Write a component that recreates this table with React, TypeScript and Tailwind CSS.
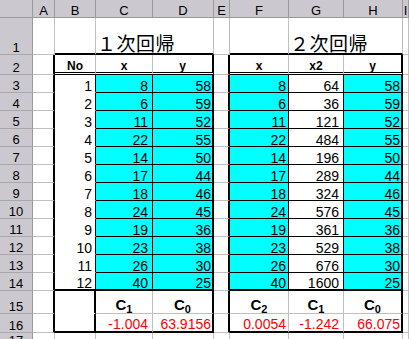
import type { ReactNode } from 'react'

const COLS = ['A', 'B', 'C', 'D', 'E', 'F', 'G', 'H', 'I']
const ROWS = Array.from({ length: 17 }, (_, i) => i + 1)

// 回帰用のサンプルデータ
const X = [8, 6, 11, 22, 14, 17, 18, 24, 19, 23, 26, 40]
const Y = [58, 59, 52, 55, 50, 44, 46, 45, 36, 38, 30, 25]

const RIGHT = {
  g: 'border-r border-r-[#c0c0c0]',
  b: 'border-r border-r-black',
  B: 'border-r-2 border-r-black',
}
const BOTTOM = {
  g: 'border-b border-b-[#c0c0c0]',
  b: 'border-b border-b-black',
  B: 'border-b-2 border-b-black',
  w: 'border-b border-b-white',
  d: 'border-b-[3px] border-b-black [border-bottom-style:double]',
}

// 列ごとの右余白 (A..I)
const PR = ['', 'pr-[3px]', 'pr-[4px]', 'pr-[1px]', '', 'pr-[2px]', 'pr-[4px]', 'pr-[1px]', '']

const inTable = (c: number) => (c >= 1 && c <= 3) || (c >= 5 && c <= 7)

function rightEdge(r: number, c: number): keyof typeof RIGHT {
  const body = r >= 2 && r <= 16
  if (body && (c === 0 || c === 3 || c === 4 || c === 7)) return 'B'
  if (r >= 3 && r <= 14 && (c === 1 || c === 2 || c === 5 || c === 6)) return 'b'
  if ((r === 15 || r === 16) && c === 1) return 'B'
  return 'g'
}

function bottomEdge(r: number, c: number): keyof typeof BOTTOM {
  if (!inTable(c)) return 'g'
  if (r === 1 || r === 14 || r === 16) return 'B'
  if (r === 2) return 'd'
  if (c === 1 && r >= 3 && r <= 15) return 'w'
  if (r >= 3 && r <= 13) return 'b'
  return 'g'
}

function Coef({ n }: { n: number }) {
  return (
    <span className="pb-[2px] text-[15px] font-bold leading-[12px]">
      C<sub className="text-[11px]">{n}</sub>
    </span>
  )
}

function content(r: number, c: number): { node?: ReactNode; center?: boolean } {
  if (r === 2) {
    const head = ['', 'No', 'x', 'y', '', 'x', 'x2', 'y', '']
    return {
      node: head[c] && <span className="text-[12px] font-bold leading-[12px]">{head[c]}</span>,
      center: true,
    }
  }
  if (r >= 3 && r <= 14) {
    const i = r - 3
    const v = [null, i + 1, X[i], Y[i], null, X[i], X[i] * X[i], Y[i], null][c]
    return { node: v !== null && <span className="leading-[12px]">{v}</span> }
  }
  if (r === 15) {
    const n = [null, null, 1, 0, null, 2, 1, 0, null][c]
    return { node: n !== null && <Coef n={n} />, center: true }
  }
  if (r === 16) {
    const v = ['', '', '-1.004', '63.9156', '', '0.0054', '-1.242', '66.075', ''][c]
    return { node: v && <span className="pb-[1px] leading-[12px] text-[#ff0000]">{v}</span> }
  }
  return {}
}

function Cell({ r, c }: { r: number; c: number }) {
  const { node, center } = content(r, c)
  const cyan = r >= 3 && r <= 14 && (c === 2 || c === 3 || c === 5 || c === 7)
  return (
    <div
      className={`flex items-end ${center ? 'justify-center' : `justify-end ${PR[c]}`} ${RIGHT[rightEdge(r, c)]} ${BOTTOM[bottomEdge(r, c)]} ${cyan ? 'bg-[#00ffff]' : 'bg-white'}`}
    >
      {node}
    </div>
  )
}

function Title({ text, last }: { text: string; last: number }) {
  return (
    <div
      className={`col-span-2 flex items-end pl-[1px] ${RIGHT[rightEdge(1, last)]} border-b-2 border-b-black`}
    >
      <span className="font-['Noto_Sans_CJK_JP',sans-serif] text-[19px] leading-[20px] tracking-[0.5px]">
        {text}
      </span>
    </div>
  )
}

function RowHead({ r }: { r: number }) {
  return (
    <div className="flex items-end justify-center border-r border-b border-r-[#9a9a9a] border-b-[#a8a8a8] bg-[#ccc8d0] text-[13px]">
      <span className="leading-[12px]">{r}</span>
    </div>
  )
}

export default function App() {
  return (
    <div className="h-[339px] w-[409px] overflow-hidden bg-white font-['Liberation_Sans',Arial,sans-serif] text-[14px] text-black">
      <div className="grid grid-cols-[33px_22px_41px_57px_61px_16px_59px_55px_59px_6px] grid-rows-[18px_37px_20px_repeat(12,18px)_23px_19px_15px]">
        {/* 列見出し */}
        <div className="border-r border-b border-r-[#9a9a9a] border-b-[#9a9a9a] bg-[#ccc8d0]" />
        {COLS.map((l) => (
          <div
            key={l}
            className="flex items-end justify-center overflow-hidden border-r border-b border-r-[#9a9a9a] border-b-[#9a9a9a] bg-[#ccc8d0] text-[13px]"
          >
            <span className="leading-[13px]">{l}</span>
          </div>
        ))}

        {ROWS.map((r) =>
          r === 1 ? (
            <div key={r} className="contents">
              <RowHead r={r} />
              <Cell r={1} c={0} />
              <Cell r={1} c={1} />
              <Title text="１次回帰" last={3} />
              <Cell r={1} c={4} />
              <Cell r={1} c={5} />
              <Title text="２次回帰" last={7} />
              <Cell r={1} c={8} />
            </div>
          ) : (
            <div key={r} className="contents">
              <RowHead r={r} />
              {COLS.map((_, c) => (
                <Cell key={c} r={r} c={c} />
              ))}
            </div>
          )
        )}
      </div>
    </div>
  )
}
